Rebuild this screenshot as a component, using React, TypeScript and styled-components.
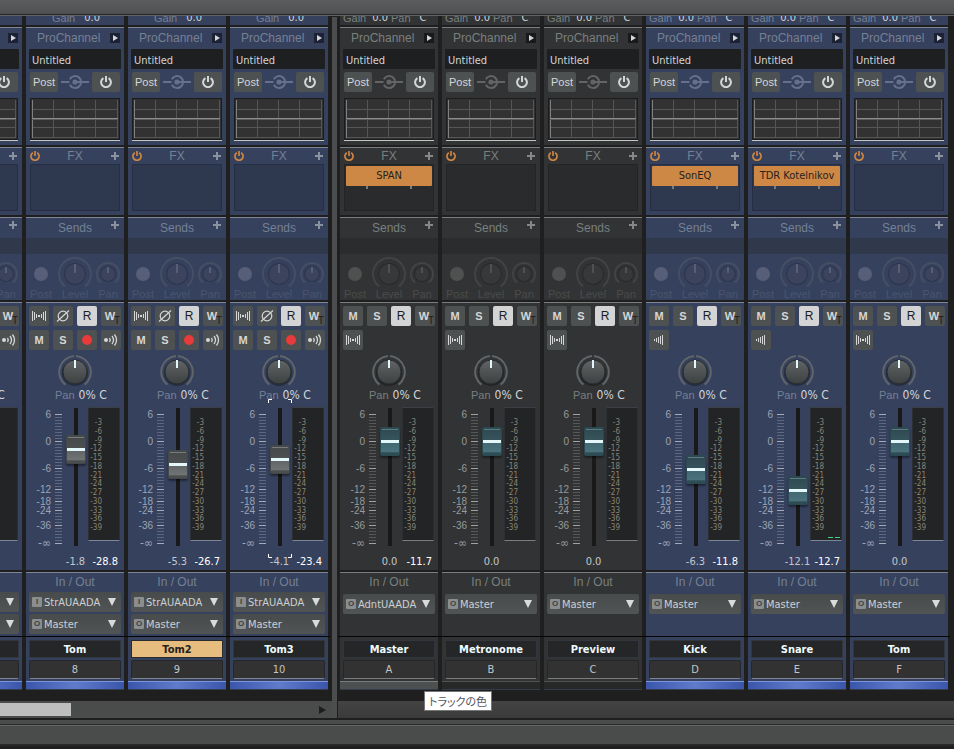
import React from "react";
import styled, { createGlobalStyle, css, ThemeProvider } from "styled-components";

const UI = `"DejaVu Sans Condensed", "DejaVu Sans", "Noto Sans", sans-serif`;
const LABEL = `"Liberation Sans", Arial, sans-serif`;

const blue = {
  panel: "#36415e",
  edge: "#7d8597",
  plus: "#8a92a0",
  title: "#748093",
  faint: "#4a556f",
  well: "#2e384f",
  wellEdge: "#252e42",
  band: "#30384c",
  play: "#1c2233",
  wire: "#66708c",
  minor: "#5d6781",
  major: "#a5abb9",
  scale: "#9da4b4",
  sendFace: "#3b445c",
  sendRing: "#454e62",
  sendDot: "#575f78",
  bar: "linear-gradient(90deg, #3a56ab, #617bcb 50%, #3a56ab)",
  barEdge: "#7d94dc",
};

const grey = {
  panel: "#323334",
  edge: "#7b7d7d",
  plus: "#868888",
  title: "#78807f",
  faint: "#4b4c4c",
  well: "#2a2b2c",
  wellEdge: "#232424",
  band: "#2b2c2d",
  play: "#191919",
  wire: "#636464",
  minor: "#565757",
  major: "#a0a2a2",
  scale: "#979a9a",
  sendFace: "#373839",
  sendRing: "#424343",
  sendDot: "#4f5050",
  bar: "#4d5050",
  barEdge: "#7a7c7c",
};

const greyUnlit = { ...grey, bar: "#272928", barEdge: "#505352" };

type Tone = typeof blue;

declare module "styled-components" {
  export interface DefaultTheme extends Tone {}
}

const Global = createGlobalStyle`
  *, *::before, *::after { box-sizing: border-box; }
  body { margin: 0; background: #1f1f1f; }
  button, input, select { margin: 0; padding: 0; border: 0; font: inherit; color: inherit; background: none; border-radius: 0; outline: none; }
  svg { display: block; flex: none; }
`;

const Page = styled.div`
  min-height: 100vh;
  display: flex;
  flex-direction: column;
  background: #1f1f1f;
  font: 11px/12px ${LABEL};
  overflow: hidden;
`;

const TopBar = styled.header`
  height: 16px;
  background: linear-gradient(#5c5d5e, #4e4f50);
  border-bottom: 1px solid #626364;
  box-shadow: inset 0 -1px #262626;
`;

const Mixer = styled.main`
  display: flex;
`;

const Pane = styled.section<{ $tracks?: boolean }>`
  display: flex;
  flex-direction: column;
  min-width: 0;
  overflow: hidden;
  ${(p) => (p.$tracks ? css`flex: 0 0 332px;` : css`flex: 1;`)}
`;

const Strips = styled.div<{ $end?: boolean }>`
  display: flex;
  gap: 4px;
  padding: 0 ${(p) => (p.$end ? 4 : 2)}px 11px 2px;
  justify-content: ${(p) => (p.$end ? "flex-end" : "flex-start")};
`;

const Splitter = styled.div`
  flex: none;
  width: 5px;
  margin: 1px 1px 0 0;
  background: #4c4d4e;
`;

const ScrollLane = styled.div<{ $active?: boolean }>`
  display: flex;
  align-items: center;
  justify-content: space-between;
  height: 17px;
  padding-right: 6px;
  background: ${(p) => (p.$active ? "#4a4c4b" : "linear-gradient(#434343, #3b3b3b)")};
`;

const ScrollThumb = styled.div`
  width: 71px;
  height: 13px;
  background: #bebebe;
`;

const StatusBar = styled.footer`
  margin-top: 2px;
  background: #4a4c4b;
  border-bottom: 2px solid #272828;
  &::before {
    content: "";
    display: block;
    height: 6px;
    border-bottom: 1px solid #666;
    box-shadow: inset 0 -1px #2b2b2b;
  }
`;

const StatusBody = styled.div`
  height: 18px;
`;

const Strip = styled.article`
  flex: none;
  width: 98px;
  color: #d3d6d9;
`;

const Section = styled.section<{ $h: number; $last?: boolean }>`
  height: ${(p) => p.$h}px;
  margin-bottom: ${(p) => (p.$last ? 0 : 2)}px;
  border-top: 1px solid ${(p) => p.theme.edge};
  background: ${(p) => p.theme.panel};
`;

const GainRow = styled.div`
  display: flex;
  align-items: flex-end;
  gap: 3px;
  height: 9px;
  margin-bottom: 2px;
  padding: 0 3px 1px;
  overflow: hidden;
  background: ${(p) => p.theme.panel};
  color: ${(p) => p.theme.title};
`;

const GainPair = styled.span<{ $inset?: boolean; $wide?: boolean }>`
  display: flex;
  gap: ${(p) => (p.$wide ? 9 : 6)}px;
  margin-left: ${(p) => (p.$inset ? 23 : 0)}px;
  b { font: 11px/12px ${UI}; color: #d3d6d9; }
`;

const Head = styled.header<{ $h: number; $left?: boolean }>`
  display: grid;
  grid-template-columns: ${(p) => (p.$left ? "7px auto 1fr" : "1fr auto 1fr")};
  align-items: center;
  height: ${(p) => p.$h}px;
  padding: 0 4px;
`;

const Title = styled.h3`
  grid-column: 2;
  margin: 0;
  font: 12px/14px ${LABEL};
  color: ${(p) => p.theme.title};
`;

const IconButton = styled.button<{ $right?: boolean; $top?: boolean }>`
  display: flex;
  grid-row: 1;
  grid-column: ${(p) => (p.$right ? 3 : 1)};
  justify-self: ${(p) => (p.$right ? "end" : "start")};
  align-self: ${(p) => (p.$top ? "start" : "center")};
  padding: ${(p) => (p.$top ? 3 : 0)}px ${(p) => (p.$right ? 1 : 0)}px 0 0;
  color: ${(p) => (p.$right ? p.theme.plus : "#cf8743")};
`;

const PlayButton = styled(IconButton)`
  width: 10px;
  height: 10px;
  padding: 0;
  background: ${(p) => p.theme.play};
`;

const Preset = styled.input`
  display: block;
  width: 92px;
  height: 20px;
  margin: 2px 3px 3px;
  padding: 2px 3px 0;
  border-radius: 1px;
  background: #1e1f20;
  font: 11px/18px ${UI};
  color: #d3d6d9;
`;

const PostRow = styled.div`
  display: flex;
  justify-content: space-between;
  align-items: center;
  padding: 0 4px;
`;

const Key = styled.button<{ $wide?: boolean; $on?: boolean; $bold?: boolean }>`
  display: flex;
  align-items: center;
  justify-content: center;
  width: ${(p) => (p.$wide ? 28 : 20)}px;
  height: 20px;
  border-radius: 2px;
  background: ${(p) => (p.$on ? "#d4d4d4" : "#4d5152")};
  color: ${(p) => (p.$on ? "#1d1d1d" : "#d6d6d6")};
  font: ${(p) => (p.$bold ? "bold" : "normal")} ${(p) => (p.$on ? 12 : 11)}px/20px ${LABEL};
`;

const WriteKey = styled(Key)`
  position: relative;
  padding-right: 2px;
  &::after {
    content: "T";
    position: absolute;
    right: 1px;
    bottom: 0;
    font: 10px/10px ${LABEL};
    color: #1d1e1e;
  }
`;

const Graph = styled.svg`
  margin: 6px 4px 0;
`;

const FxBox = styled.div`
  height: 47px;
  margin: 0 4px;
  padding: 1px;
  border: 1px solid ${(p) => p.theme.wellEdge};
  background: ${(p) => p.theme.well};
`;

const Plugin = styled.button`
  display: block;
  width: 100%;
  height: 20px;
  border-radius: 1px;
  background: #cd8845;
  color: #262220;
  font: 11px/20px ${UI};
  white-space: nowrap;
`;

const Pegs = styled.div`
  display: flex;
  justify-content: space-between;
  padding: 0 20px;
  &::before, &::after {
    content: "";
    width: 2px;
    height: 3px;
    background: #7b7d7d;
  }
`;

const SendBand = styled.div`
  height: 16px;
  background: ${(p) => p.theme.band};
`;

const SendRow = styled.div`
  display: grid;
  grid-template-columns: 30px 38px 28px;
  padding-top: 5px;
  color: ${(p) => p.theme.faint};
`;

const SendCell = styled.label`
  position: relative;
  display: flex;
  flex-direction: column;
  align-items: center;
  line-height: 10px;
  svg { height: 30px; overflow: visible; }
`;

const Ghost = styled.input`
  position: absolute;
  inset: 0;
  width: 100%;
  height: 100%;
  opacity: 0;
  cursor: pointer;
`;

const KeyGrid = styled.div`
  display: grid;
  grid-template-columns: repeat(4, 20px);
  grid-auto-rows: 20px;
  gap: 4px;
  height: 52px;
  padding: 3px 3px 0;
`;

const PanKnob = styled.label`
  position: relative;
  display: flex;
  flex-direction: column;
  align-items: center;
`;

const PanText = styled.span`
  display: flex;
  align-self: flex-start;
  gap: 4px;
  margin-left: 29px;
  color: ${(p) => p.theme.title};
  line-height: 12px;
  b { font: 12px/12px ${UI}; color: #d3d6d9; white-space: nowrap; }
`;

const FaderRow = styled.div`
  display: flex;
  height: 139px;
  margin-top: 6px;
`;

const ScaleLabels = styled.div`
  display: grid;
  grid-template-rows: 27px 27px 21px 12px 9px 15px 18px 9px;
  width: 25px;
  margin: 3px 4px 0 0;
  text-align: right;
  font: 10px/9px ${LABEL};
  color: ${(p) => p.theme.scale};
  span:last-child { font: 12px/9px ${UI}; }
`;

const Ticks = styled.svg`
  margin: 7px 4px 0 0;
`;

const FaderSlot = styled.div`
  position: relative;
  width: 20px;
  height: 138px;
  margin: 1px 2px 0 0;
`;

const Fader = styled.input<{ $bus?: boolean }>`
  appearance: none;
  display: block;
  width: 20px;
  height: 138px;
  writing-mode: vertical-lr;
  direction: rtl;
  background: linear-gradient(#19191a, #19191a) center / 4px 100% no-repeat;
  &::-webkit-slider-thumb {
    appearance: none;
    width: 20px;
    height: 29px;
    border: 1px solid ${(p) => (p.$bus ? "#2b4951" : "#454849")};
    border-radius: 2px;
    background:
      linear-gradient(#e3f7fa, #e3f7fa) center 12px / 100% 3px no-repeat,
      linear-gradient(${(p) => (p.$bus ? "#577c84, #577c84" : "#777b7b, #777b7b")}) center 1px / 16px 1px no-repeat,
      ${(p) =>
        p.$bus
          ? "linear-gradient(#30484f, #36545c 45%, #426872 55%, #4b737d 88%, #2e4c54 92%)"
          : "linear-gradient(#464949, #4d5050 45%, #636666 55%, #717474 88%, #4b4e4e 92%)"};
    box-shadow: 0 2px 2px rgba(0, 0, 0, 0.4);
  }
`;

const Focus = styled.svg`
  position: absolute;
  left: -2px;
  top: -9px;
`;

const Meter = styled.div`
  display: flex;
  flex-direction: column;
  justify-content: space-between;
  width: 32px;
  height: 134px;
  padding-top: 11px;
  border: 1px solid #2c2f34;
  border-top-color: #3c3f45;
  border-bottom-color: ${(p) => p.theme.edge};
  background: #232425;
`;

const MeterScale = styled.div`
  display: grid;
  grid-template-rows: repeat(13, 1fr);
  width: 13px;
  height: 114px;
  text-align: right;
  font: 8px/8px ${UI};
  color: #8a8474;
`;

const Level = styled.div`
  display: flex;
  justify-content: flex-end;
  gap: 2px;
  padding: 0 1px 2px 0;
  &::before, &::after {
    content: "";
    width: 5px;
    height: 1px;
    background: #43d184;
  }
`;

const Values = styled.div`
  display: grid;
  grid-template-columns: 29px 28px;
  margin: 9px 0 0 35px;
  text-align: center;
  font: 11px/14px ${UI};
  color: #c3c7cc;
  b { font-weight: normal; text-align: right; color: #fff; }
`;

const Routes = styled.div<{ $single: boolean }>`
  display: flex;
  flex-direction: column;
  gap: 2px;
  padding: ${(p) => (p.$single ? 3 : 1)}px 3px 0;
`;

const Route = styled.label`
  display: flex;
  align-items: center;
  height: 20px;
  padding: 0 5px 0 3px;
  border-radius: 2px;
  background: linear-gradient(#474b4c, #515454);
`;

const Badge = styled.span`
  flex: none;
  width: 10px;
  height: 10px;
  border-radius: 1px;
  background: #8b8e8e;
  color: #3e4141;
  text-align: center;
  font: bold 8px/10px ${LABEL};
`;

const RouteSelect = styled.select`
  appearance: none;
  width: 59px;
  height: 20px;
  margin: 0 5px 0 2px;
  padding-top: 2px;
  font: 11px/18px ${UI};
  color: #cdd0d2;
  overflow: hidden;
  text-overflow: clip;
`;

const Divider = styled.hr`
  position: relative;
  height: 1px;
  margin: 0;
  border: 0;
  background: #050505;
  box-shadow: 2px 0 #050505, -2px 0 #050505;
`;

const Identity = styled.footer`
  padding: 3px 3px 2px;
  background: ${(p) => p.theme.panel};
`;

const Name = styled.input<{ $selected?: boolean }>`
  display: block;
  width: 100%;
  height: 18px;
  border: 1px solid ${(p) => (p.$selected ? "#2a2c30" : "#33363c")};
  background: ${(p) => (p.$selected ? "#e6bd7e" : "#252627")};
  color: ${(p) => (p.$selected ? "#26221c" : "#eefcff")};
  text-align: center;
  font: bold 11px/16px ${UI};
`;

const Slot = styled.div`
  height: 19px;
  margin-top: 2px;
  border: 1px solid #25272a;
  border-bottom-color: ${(p) => p.theme.edge};
  border-radius: 2px;
  background: #323232;
  color: #c3c5c7;
  text-align: center;
  font: 11px/17px ${UI};
`;

const ColourBar = styled.button`
  display: block;
  width: 100%;
  height: 9px;
  border-top: 1px solid ${(p) => p.theme.barEdge};
  border-bottom: 1px solid #343b4c;
  background: ${(p) => p.theme.bar};
`;

const TipAnchor = styled.div`
  position: relative;
`;

const Tip = styled.div`
  position: absolute;
  top: 10px;
  left: 84px;
  z-index: 2;
  height: 20px;
  padding: 0 4px;
  border: 1px solid #767676;
  background: #fff;
  color: #55555f;
  font: 11px/18px "Noto Sans CJK JP", sans-serif;
  font-feature-settings: "palt";
  white-space: nowrap;
`;

const PowerIcon = ({ size }: { size: number }) => (
  <svg width={size} height={size} viewBox="0 0 12 12" fill="none" stroke="currentColor" strokeWidth="2">
    <path d="M3.400 2.100A4.900 4.900 0 1 0 8.600 2.100" />
    <path d="M6 0v6" />
  </svg>
);

const PlusIcon = () => (
  <svg width="8" height="8" viewBox="0 0 8 8" fill="currentColor">
    <path d="M3 0h2v3h3v2H5v3H3V5H0V3h3z" />
  </svg>
);

const WireIcon = ({ color }: { color: string }) => (
  <svg width="28" height="16" viewBox="0 0 28 16" fill="none" stroke={color} strokeWidth="2">
    <path d="M0 8h8.500M8.800 5.200A6 6 0 1 1 8.800 10.800M14 8h14" />
    <circle cx="14" cy="8" r="2.600" fill={color} stroke="none" />
  </svg>
);

const Curve = () => (
  <Graph width="90" height="43" viewBox="0 0 90 43" shapeRendering="crispEdges">
    <rect width="90" height="43" rx="1" fill="#1b1c1d" />
    <rect x="1" y="1" width="88" height="40" fill="#323232" />
    <g fill="#555">
      <rect x="23" y="2" width="1" height="38" />
      <rect x="44" y="2" width="1" height="38" />
      <rect x="65" y="2" width="1" height="38" />
      <rect x="87" y="2" width="1" height="38" />
      <rect x="2" y="11" width="86" height="1" />
      <rect x="2" y="29" width="86" height="1" />
      <rect x="2" y="39" width="86" height="1" />
    </g>
    <rect x="2" y="2" width="1" height="38" fill="#808080" />
    <rect x="2" y="20" width="86" height="1" fill="#8c8c8c" />
    <rect x="2" y="21" width="86" height="1" fill="#5c5c5c" />
    <rect y="42" width="90" height="1" fill="#c2c7c4" />
  </Graph>
);

const PanDial = () => (
  <svg width="34" height="34" viewBox="-17 -17 34 34">
    <defs>
      <linearGradient id="dial" x1="0" y1="0" x2="0" y2="1">
        <stop offset="0" stopColor="#606465" />
        <stop offset="1" stopColor="#3d4041" />
      </linearGradient>
    </defs>
    <path d="M-9.600 12.600A16 16 0 0 1-1-16M1-16A16 16 0 0 1 9.600 12.600" fill="none" stroke="#60656a" strokeWidth="2" />
    <circle r="13" cy="1" fill="#000" opacity=".3" />
    <circle r="12" fill="url(#dial)" stroke="#2a2d30" strokeWidth="1" />
    <rect x="-1" y="-12" width="2" height="8" fill="#e3f4fb" />
  </svg>
);

const SendDial = ({ ring, face, tone }: { ring: number; face: number; tone: Tone }) => {
  const dx = ring * 0.62;
  const dy = ring * 0.78;
  return (
    <svg width={ring * 2} viewBox={`${-ring} -15 ${ring * 2} 30`}>
      <path
        d={`M${-dx} ${dy}A${ring} ${ring} 0 1 1 ${dx} ${dy}`}
        fill="none"
        stroke={tone.sendRing}
        strokeWidth="2"
      />
      <circle r={face + 1} fill="#000" opacity=".18" />
      <circle r={face} fill={tone.sendFace} />
      <rect x="-1" y={-face} width="2" height={face - 1} fill={tone.sendDot} />
    </svg>
  );
};

const StereoIcon = () => (
  <svg width="20" height="20" viewBox="0 0 20 20" fill="#d6d6d6">
    <path d="M3 5h1v10H3zM5 6h1v8H5zM7 8h1v4H7zM9 9h2v2H9zM12 8h1v4h-1zM14 6h1v8h-1zM16 5h1v10h-1z" />
  </svg>
);

const MonoIcon = () => (
  <svg width="20" height="20" viewBox="0 0 20 20" fill="#d6d6d6">
    <path d="M5 9h1v2H5zM7 8h1v4H7zM9 7h1v6H9zM11 6h1v8h-1zM13 5h1v10h-1z" />
  </svg>
);

const PhaseIcon = () => (
  <svg width="20" height="20" viewBox="0 0 20 20" fill="none" stroke="#d6d6d6" strokeWidth="1.200">
    <circle cx="10" cy="10" r="4.800" />
    <path d="M4 15.500L16 4.500" />
  </svg>
);

const RecordIcon = () => (
  <svg width="20" height="20" viewBox="0 0 20 20">
    <circle cx="10" cy="10" r="5" fill="#e83a3a" />
  </svg>
);

const EchoIcon = () => (
  <svg width="20" height="20" viewBox="0 0 20 20" fill="none" stroke="#d6d6d6" strokeWidth="1.300">
    <circle cx="5" cy="10" r="2" fill="#d6d6d6" stroke="none" />
    <path d="M8.500 8q1.500 2 0 4M11 6q3 4 0 8M13.500 4.500q4 5.500 0 11" />
  </svg>
);

const MAJOR = [0, 9, 18, 25, 29, 32, 37, 43];
const SCALE = ["6", "0", "-6", "-12", "-18", "-24", "-36", "-∞"];
const METER = Array.from({ length: 13 }, (_, i) => -3 * (i + 1));

interface Track {
  name: string;
  id: string;
  tone: Tone;
  level: number;
  gain: string;
  peak?: string;
  input?: string;
  output: string;
  plugin?: string;
  mono?: boolean;
  bus?: boolean;
  selected?: boolean;
  focused?: boolean;
  active?: boolean;
  tip?: string;
}

const rec = { tone: blue, input: "StrAUAADA", output: "Master" };
const tracks: Track[] = [
  { ...rec, name: "Tom", id: "7", level: 76, gain: "0.0" },
  { ...rec, name: "Tom", id: "8", level: 82, gain: "-1.8", peak: "-28.8" },
  { ...rec, name: "Tom2", id: "9", level: 67, gain: "-5.3", peak: "-26.7", selected: true },
  { ...rec, name: "Tom3", id: "10", level: 72, gain: "-4.1", peak: "-23.4", focused: true },
];
const buses: Track[] = [
  { name: "Master", id: "A", tone: grey, level: 90, gain: "0.0", peak: "-11.7", output: "AdntUAADA", plugin: "SPAN", bus: true, tip: "トラックの色" },
  { name: "Metronome", id: "B", tone: greyUnlit, level: 90, gain: "0.0", output: "Master", bus: true },
  { name: "Preview", id: "C", tone: greyUnlit, level: 90, gain: "0.0", output: "Master", bus: true },
  { name: "Kick", id: "D", tone: blue, level: 62, gain: "-6.3", peak: "-11.8", output: "Master", plugin: "SonEQ", mono: true, bus: true },
  { name: "Snare", id: "E", tone: blue, level: 41, gain: "-12.1", peak: "-12.7", output: "Master", plugin: "TDR Kotelnikov", mono: true, bus: true, active: true },
  { name: "Tom", id: "F", tone: blue, level: 90, gain: "0.0", output: "Master", bus: true },
];

const RoutePicker = ({ kind, value }: { kind: "I" | "O"; value: string }) => (
  <Route>
    <Badge>{kind}</Badge>
    <RouteSelect defaultValue={value} aria-label={kind === "I" ? "Input" : "Output"}>
      <option>{value}</option>
    </RouteSelect>
    <svg width="8" height="8" viewBox="0 0 8 8" fill="#d9dbdb">
      <path d="M0 0h8L4 8z" />
    </svg>
  </Route>
);

const Channel = ({ t }: { t: Track }) => (
  <ThemeProvider theme={t.tone}>
    <Strip aria-label={`${t.name} ${t.id}`}>
      <GainRow>
        <GainPair $inset={!t.bus} $wide={!t.bus}>Gain <b>0.0</b></GainPair>
        {t.bus && <GainPair $wide>Pan <b>C</b></GainPair>}
      </GainRow>

      <Section $h={118}>
        <Head $h={19} $left>
          <Title>ProChannel</Title>
          <PlayButton $right aria-label="Expand ProChannel">
            <svg width="10" height="10" viewBox="0 0 10 10" fill="#d3d6d9">
              <path d="M3 2l5 3-5 3z" />
            </svg>
          </PlayButton>
        </Head>
        <Preset defaultValue="Untitled" aria-label="ProChannel preset" />
        <PostRow>
          <Key $wide>Post</Key>
          <WireIcon color={t.tone.wire} />
          <Key $wide aria-label="ProChannel power">
            <PowerIcon size={12} />
          </Key>
        </PostRow>
        <Curve />
      </Section>

      <Section $h={68}>
        <Head $h={16}>
          <IconButton aria-label="FX power"><PowerIcon size={10} /></IconButton>
          <Title>FX</Title>
          <IconButton $right aria-label="Add effect"><PlusIcon /></IconButton>
        </Head>
        <FxBox>
          {t.plugin && (
            <>
              <Plugin>{t.plugin}</Plugin>
              <Pegs />
            </>
          )}
        </FxBox>
      </Section>

      <Section $h={83}>
        <Head $h={20}>
          <Title>Sends</Title>
          <IconButton $right $top aria-label="Add send"><PlusIcon /></IconButton>
        </Head>
        <SendBand />
        <SendRow>
          <SendCell>
            <svg width="16" viewBox="-8 -15 16 30"><circle r="7" fill={t.tone.sendDot} /></svg>
            Post
            <Ghost type="checkbox" />
          </SendCell>
          <SendCell>
            <SendDial ring={16} face={10} tone={t.tone} />
            Level
            <Ghost type="range" />
          </SendCell>
          <SendCell>
            <SendDial ring={11} face={7} tone={t.tone} />
            Pan
            <Ghost type="range" />
          </SendCell>
        </SendRow>
      </Section>

      <Section $h={268}>
        <KeyGrid>
          {t.bus ? (
            <>
              <Key $bold>M</Key>
              <Key $bold>S</Key>
              <Key $on>R</Key>
              <WriteKey $bold>W</WriteKey>
              <Key aria-label="Interleave">{t.mono ? <MonoIcon /> : <StereoIcon />}</Key>
            </>
          ) : (
            <>
              <Key aria-label="Interleave"><StereoIcon /></Key>
              <Key aria-label="Phase"><PhaseIcon /></Key>
              <Key $on>R</Key>
              <WriteKey $bold>W</WriteKey>
              <Key $bold>M</Key>
              <Key $bold>S</Key>
              <Key aria-label="Record"><RecordIcon /></Key>
              <Key aria-label="Input echo"><EchoIcon /></Key>
            </>
          )}
        </KeyGrid>
        <PanKnob>
          <PanDial />
          <PanText>Pan <b>0% C</b></PanText>
          <Ghost type="range" />
        </PanKnob>
        <FaderRow>
          <ScaleLabels>
            {SCALE.map((s) => <span key={s}>{s}</span>)}
          </ScaleLabels>
          <Ticks width="7" height="130" viewBox="0 0 7 130" shapeRendering="crispEdges">
            {Array.from({ length: 44 }, (_, i) => (
              <rect key={i} y={i * 3} width="7" height="1" fill={MAJOR.includes(i) ? t.tone.major : t.tone.minor} />
            ))}
          </Ticks>
          <FaderSlot>
            <Fader type="range" min={0} max={109} defaultValue={t.level} $bus={t.bus} aria-label={`${t.name} volume`} />
            {t.focused && (
              <Focus width="24" height="159" viewBox="0 0 24 159" fill="none" stroke="#fff" pointerEvents="none">
                <path d="M.5 4V.5H4M20 .5h3.500V4M.5 155v3.500H4M20 158.500h3.500V155" />
              </Focus>
            )}
          </FaderSlot>
          <Meter>
            <MeterScale>
              {METER.map((m) => <span key={m}>{m}</span>)}
            </MeterScale>
            {t.active && <Level />}
          </Meter>
        </FaderRow>
        <Values>
          <span>{t.gain}</span>
          <b>{t.peak}</b>
        </Values>
      </Section>

      <Section $h={64} $last>
        <Head $h={18}><Title>In / Out</Title></Head>
        <Routes $single={!t.input}>
          {t.input && <RoutePicker kind="I" value={t.input} />}
          <RoutePicker kind="O" value={t.output} />
        </Routes>
      </Section>
      <Divider />

      <Identity>
        <Name defaultValue={t.name} $selected={t.selected} aria-label="Track name" />
        <Slot>{t.id}</Slot>
      </Identity>
      <TipAnchor>
        <ColourBar aria-label="トラックの色" />
        {t.tip && <Tip role="tooltip">{t.tip}</Tip>}
      </TipAnchor>
    </Strip>
  </ThemeProvider>
);

export default function App() {
  return (
    <Page>
      <Global />
      <TopBar />
      <Mixer>
        <Pane $tracks aria-label="Tracks">
          <Strips $end>
            {tracks.map((t) => <Channel key={t.id} t={t} />)}
          </Strips>
          <ScrollLane $active>
            <ScrollThumb />
            <svg width="7" height="8" viewBox="0 0 7 8" fill="#1c1d1d"><path d="M0 0l7 4-7 4z" /></svg>
          </ScrollLane>
        </Pane>
        <Splitter />
        <Pane aria-label="Buses">
          <Strips>
            {buses.map((t) => <Channel key={t.id} t={t} />)}
          </Strips>
          <ScrollLane />
        </Pane>
      </Mixer>
      <StatusBar>
        <StatusBody />
      </StatusBar>
    </Page>
  );
}
